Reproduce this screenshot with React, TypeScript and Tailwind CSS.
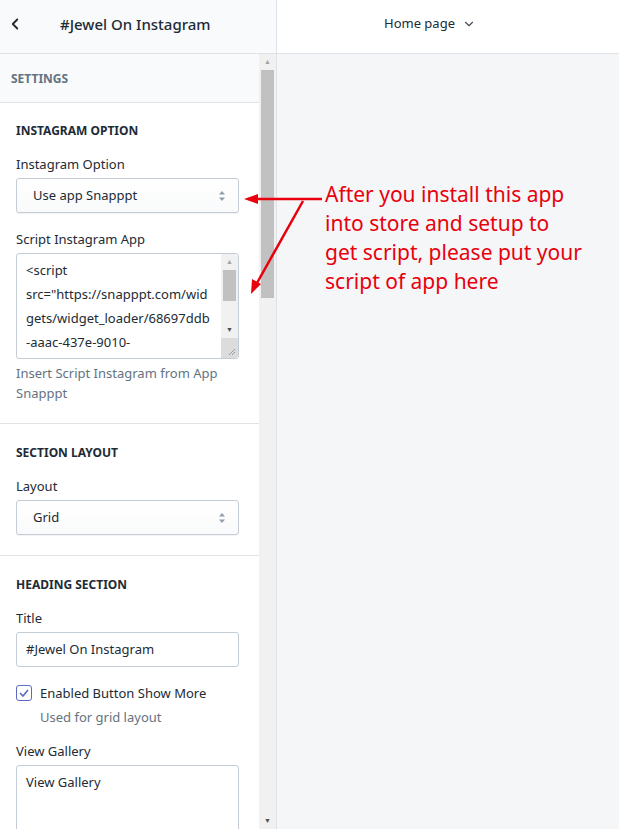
import { ChevronDown, ChevronLeft } from 'lucide-react';

const font = { fontFamily: '"Noto Sans", "Open Sans", sans-serif' };

function SelectBox({ value }: { value: string }) {
    return (
        <div className="flex h-[35px] items-center justify-between rounded-[3px] border border-[#c4cdd5] bg-gradient-to-b from-white to-[#f9fafb] pl-4 pr-3 text-[13px] text-[#212b36] shadow-[0_1px_0_rgba(22,29,37,0.05)]">
            <span>{value}</span>
            <svg width="8" height="12" viewBox="0 0 8 12" className="text-[#919eab]">
                <path d="M4 1 L7 4.5 H1 Z" fill="currentColor" />
                <path d="M4 11 L7 7.5 H1 Z" fill="currentColor" />
            </svg>
        </div>
    );
}

function Section({ title, children, first }: { title: string; children: React.ReactNode; first?: boolean }) {
    return (
        <div className={`border-b border-[#dfe3e8] bg-white pl-4 pr-[20px] pb-[20px] ${first ? 'pt-[20px]' : 'pt-[21px]'}`}>
            <h3 className="mb-[15px] text-[12px] font-bold uppercase leading-[16px] text-[#212b36]">{title}</h3>
            {children}
        </div>
    );
}

function Label({ children }: { children: React.ReactNode }) {
    return <div className="mb-[4px] text-[13px] leading-[20px] text-[#212b36]">{children}</div>;
}

export default function App() {
    return (
        <div className="relative flex h-[829px] w-[619px] overflow-hidden bg-[#f4f6f8]" style={font}>
            {/* Sidebar */}
            <div className="flex w-[277px] shrink-0 flex-col border-r border-[#dfe3e8] bg-white">
                <div className="flex h-[54px] shrink-0 items-center border-b border-[#dfe3e8] bg-[#f9fafb] pb-[5px]">
                    <ChevronLeft size={18} strokeWidth={2.5} className="ml-[6px] text-[#212b36]" />
                    <span className="ml-[36px] text-[15px] font-medium text-[#212b36]">#Jewel On Instagram</span>
                </div>
                <div className="flex min-h-0 flex-1">
                    <div className="w-[259px] shrink-0">
                        <div className="flex h-[49px] items-center border-b border-[#dfe3e8] bg-[#f9fafb] px-[11px] pt-[2px] text-[12px] font-bold uppercase text-[#637381]">
                            Settings
                        </div>

                        <Section title="Instagram Option" first>
                            <Label>Instagram Option</Label>
                            <SelectBox value="Use app Snapppt" />
                            <div className="mt-[16px]">
                                <Label>Script Instagram App</Label>
                                <div className="flex h-[106px] overflow-hidden rounded-[3px] border border-[#c4cdd5] bg-white">
                                    <div className="flex-1 pl-[9px] pt-[4px] text-[13px] leading-[24px] text-[#212b36]">
                                        <div>&lt;script</div>
                                        <div>src="https://snapppt.com/wid</div>
                                        <div>gets/widget_loader/68697ddb</div>
                                        <div>-aaac-437e-9010-</div>
                                    </div>
                                    <div className="flex w-[17px] flex-col bg-[#f1f1f1]">
                                        <div className="flex h-[16px] items-center justify-center text-[7px] text-[#a3a3a3]">▲</div>
                                        <div className="mx-[2px] h-[31px] bg-[#c1c1c1]" />
                                        <div className="flex-1" />
                                        <div className="flex h-[16px] items-center justify-center text-[7px] text-[#505050]">▼</div>
                                        <div className="flex h-[20px] items-end justify-end bg-[#dcdcdc] pb-[2px] pr-[2px]">
                                            <svg width="8" height="8" viewBox="0 0 8 8">
                                                <path d="M1 7 L7 1 M4 7 L7 4" stroke="#999" strokeWidth="1" />
                                            </svg>
                                        </div>
                                    </div>
                                </div>
                                <div className="mt-[4px] text-[13px] leading-[20px] text-[#637381]">
                                    Insert Script Instagram from App Snapppt
                                </div>
                            </div>
                        </Section>

                        <Section title="Section Layout">
                            <Label>Layout</Label>
                            <SelectBox value="Grid" />
                        </Section>

                        <Section title="Heading Section">
                            <Label>Title</Label>
                            <div className="flex h-[35px] items-center rounded-[3px] border border-[#c4cdd5] bg-white px-[9px] text-[13px] text-[#212b36]">
                                #Jewel On Instagram
                            </div>
                            <div className="mt-[16px] flex items-center gap-[8px]">
                                <div className="flex h-[16px] w-[16px] items-center justify-center rounded-[3px] border border-[#5c6ac4] bg-white">
                                    <svg width="10" height="8" viewBox="0 0 10 8">
                                        <path d="M1 4 L4 7 L9 1" fill="none" stroke="#5c6ac4" strokeWidth="1.6" />
                                    </svg>
                                </div>
                                <span className="text-[13px] leading-[20px] text-[#212b36]">Enabled Button Show More</span>
                            </div>
                            <div className="ml-[24px] mt-[4px] text-[13px] leading-[20px] text-[#637381]">Used for grid layout</div>
                            <div className="mt-[14px]">
                                <Label>View Gallery</Label>
                                <div className="h-[80px] rounded-[3px] border border-[#c4cdd5] bg-white px-[9px] pt-[4px] text-[13px] leading-[24px] text-[#212b36]">
                                    View Gallery
                                </div>
                            </div>
                        </Section>
                    </div>
                    {/* scrollbar */}
                    <div className="flex w-[17px] shrink-0 flex-col bg-[#f1f1f1]">
                        <div className="flex h-[16px] items-center justify-center text-[7px] text-[#a3a3a3]">▲</div>
                        <div className="mx-[2px] h-[228px] bg-[#c1c1c1]" />
                        <div className="flex-1" />
                        <div className="flex h-[16px] items-center justify-center text-[7px] text-[#505050]">▼</div>
                    </div>
                </div>
            </div>

            {/* Preview */}
            <div className="flex flex-1 flex-col">
                <div className="flex h-[54px] shrink-0 items-center justify-center gap-[7px] border-b border-[#dfe3e8] bg-white pb-[5px] pr-[36px] text-[13px] text-[#212b36]">
                    <span>Home page</span>
                    <ChevronDown size={14} className="text-[#454f5b]" />
                </div>
                <div className="pl-[48px] pt-[126px] text-[21px] leading-[29px] text-[#e8000d]">
                    After you install this app
                    <br />
                    into store and setup to
                    <br />
                    get script, please put your
                    <br />
                    script of app here
                </div>
            </div>

            {/* annotation arrows */}
            <svg className="pointer-events-none absolute left-0 top-0" width="619" height="829">
                <g stroke="#e8000d" strokeWidth="2.5" fill="#e8000d">
                    <line x1="322" y1="199" x2="254" y2="199" />
                    <path d="M244 199 L258 194 L258 204 Z" stroke="none" />
                    <line x1="303" y1="201" x2="257" y2="283" />
                    <path d="M251 294 L252 279 L261 284 Z" stroke="none" />
                </g>
            </svg>
        </div>
    );
}
